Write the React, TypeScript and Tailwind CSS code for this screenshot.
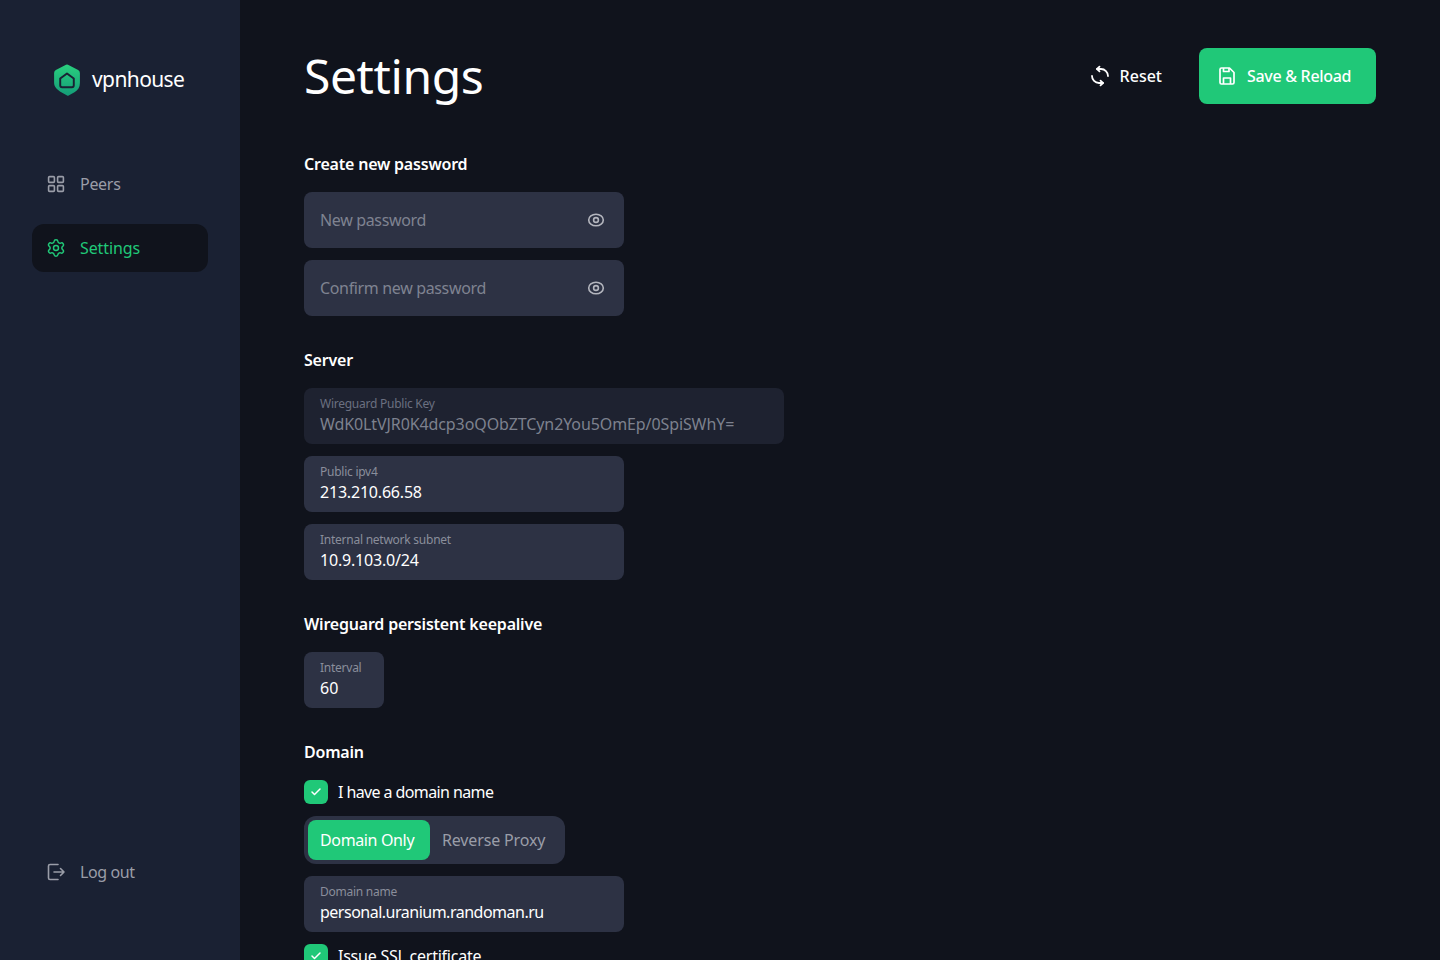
import { Check, Settings } from "lucide-react";

const font = "font-['Noto_Sans',sans-serif]";

function Logo() {
  return (
    <div className="flex h-8 items-center gap-[11px] pl-[21px]">
      <svg width="28" height="32" viewBox="0 0 28 33" fill="none">
        <defs>
          <linearGradient id="shield" x1="14" y1="0" x2="14" y2="33" gradientUnits="userSpaceOnUse">
            <stop stopColor="#2ad07e" />
            <stop offset="1" stopColor="#149c78" />
          </linearGradient>
        </defs>
        <path
          d="M12 1.200a4 4 0 0 1 4 0l9.500 5a3.400 3.400 0 0 1 1.800 3v10.300c0 4.400-2 7.400-5.600 9.600l-6 3.400a1.600 1.600 0 0 1-1.600 0l-6-3.400C4.700 26.900.7 23.900.7 19.500V9.200a3.400 3.400 0 0 1 1.800-3z"
          fill="url(#shield)"
        />
        <path d="M14 9.800L21 15V22a2 2 0 0 1-2 2H9a2 2 0 0 1-2-2V15Z" stroke="#1a2133" strokeWidth="2" strokeLinejoin="round" />
      </svg>
      <span className="pb-[2px] text-[21px] leading-none tracking-[-0.6px] text-white">vpnhouse</span>
    </div>
  );
}

function GridIcon() {
  return (
    <svg width="20" height="20" viewBox="0 0 20 20" fill="none" stroke="currentColor" strokeWidth="1.6">
      <rect x="2.600" y="2.600" width="5.800" height="5.800" rx="1" />
      <rect x="11.600" y="2.600" width="5.800" height="5.800" rx="1" />
      <rect x="2.600" y="11.600" width="5.800" height="5.800" rx="1" />
      <rect x="11.600" y="11.600" width="5.800" height="5.800" rx="1" />
    </svg>
  );
}

function LogoutIcon() {
  return (
    <svg width="20" height="20" viewBox="0 0 20 20" fill="none" stroke="currentColor" strokeWidth="1.6" strokeLinecap="round" strokeLinejoin="round">
      <path d="M12 2.500H4A1.500 1.500 0 0 0 2.500 4v12A1.500 1.500 0 0 0 4 17.500h8" />
      <path d="M8 10h10M14.500 6.500L18 10l-3.500 3.500" />
    </svg>
  );
}

function ResetIcon() {
  return (
    <svg width="24" height="24" viewBox="0 0 24 24" fill="none" stroke="currentColor" strokeWidth="1.800" strokeLinecap="round" strokeLinejoin="round">
      <path d="M9 5h4a7 7 0 0 1 7 7" />
      <path d="M11.500 2.700L9 5l2.500 2.300" />
      <path d="M15 19h-4a7 7 0 0 1-7-7" />
      <path d="M12.500 16.700L15 19l-2.500 2.300" />
    </svg>
  );
}

function SaveIcon() {
  return (
    <svg width="16" height="18" viewBox="0 0 16 18" fill="none" stroke="currentColor" strokeWidth="1.700" strokeLinejoin="round">
      <path d="M2.500 1h8L15 5.500v10a1.500 1.500 0 0 1-1.500 1.500h-11A1.500 1.500 0 0 1 1 15.500v-13A1.500 1.500 0 0 1 2.500 1z" />
      <path d="M4.500 1v3.500h5.500V1" />
      <path d="M4.500 17v-6h7v6" />
    </svg>
  );
}

function EyeIcon() {
  return (
    <svg width="18" height="14" viewBox="0 0 18 14" fill="none" stroke="#b4b6be" strokeWidth="1.600">
      <ellipse cx="9" cy="7" rx="7.300" ry="5.800" />
      <circle cx="9" cy="7" r="2.400" />
    </svg>
  );
}

function TextField({
  label,
  value,
  muted,
  width = "w-[320px]",
  spacing = "",
}: {
  label: string;
  value: string;
  muted?: boolean;
  width?: string;
  spacing?: string;
}) {
  return (
    <div className={`${width} h-14 rounded-lg px-4 pt-[8px] ${muted ? "bg-[#1e2230]" : "bg-[#2d3244]"}`}>
      <div className={`text-[12px] leading-[16px] tracking-[-0.25px] ${muted ? "text-[#6b7080]" : "text-[#8a8e9b]"}`}>{label}</div>
      <div className={`text-[16px] leading-[24px] ${spacing} ${muted ? "text-[#7d818e]" : "text-white"}`}>{value}</div>
    </div>
  );
}

function PasswordField({ placeholder }: { placeholder: string }) {
  return (
    <div className="flex h-14 w-[320px] items-center justify-between rounded-lg bg-[#2d3244] pl-4 pr-[19px]">
      <span className="text-[16px] tracking-[-0.35px] text-[#7f8391]">{placeholder}</span>
      <EyeIcon />
    </div>
  );
}

function CheckRow({ label, spacing }: { label: string; spacing: string }) {
  return (
    <div className="flex h-6 items-center gap-[10px]">
      <div className="flex h-6 w-6 items-center justify-center rounded-md bg-[#20c878]">
        <Check className="h-[12px] w-[12px] text-white" strokeWidth={3} />
      </div>
      <span className={`text-[16px] text-white ${spacing}`}>{label}</span>
    </div>
  );
}

function SectionTitle({ children }: { children: string }) {
  return <h2 className="mb-4 text-[16px] font-semibold leading-6 tracking-[-0.2px] text-white">{children}</h2>;
}

export default function App() {
  return (
    <div className={`${font} flex h-screen overflow-hidden bg-[#10131c]`}>
      <aside className="flex w-[240px] shrink-0 flex-col bg-[#1a2133] px-8 pb-[64px] pt-16">
        <div className="-mx-[22px] mb-16 pl-[22px]">
          <Logo />
        </div>
        <nav className="flex flex-col gap-4">
          <a className="flex h-12 items-center gap-[14px] pl-[14px] text-[16px] tracking-[-0.3px] text-[#9a9da8]">
            <GridIcon />
            Peers
          </a>
          <a className="flex h-12 items-center gap-[14px] rounded-xl bg-[#10131c] pl-[14px] text-[16px] tracking-[-0.1px] text-[#20c878]">
            <Settings className="h-[20px] w-[20px]" strokeWidth={1.75} />
            Settings
          </a>
        </nav>
        <a className="mt-auto flex h-12 items-center gap-[14px] pl-[14px] text-[16px] tracking-[-0.4px] text-[#9a9da8]">
          <LogoutIcon />
          Log out
        </a>
      </aside>

      <main className="flex-1 overflow-hidden px-16 pt-12">
        <header className="mb-12 flex h-14 items-center justify-between">
          <h1 className="text-[48px] font-normal leading-[56px] tracking-[-0.4px] text-white">Settings</h1>
          <div className="flex items-center gap-[12px]">
            <button className="flex h-14 items-center gap-[8px] pl-[21px] pr-[25px] text-[16px] font-medium text-white">
              <ResetIcon />
              Reset
            </button>
            <button className="flex h-14 w-[177px] items-center gap-[12px] rounded-lg bg-[#20c878] pl-5 text-[16px] font-medium tracking-[-0.3px] text-white">
              <SaveIcon />
              Save &amp; Reload
            </button>
          </div>
        </header>

        <section className="mb-8">
          <SectionTitle>Create new password</SectionTitle>
          <div className="flex flex-col gap-3">
            <PasswordField placeholder="New password" />
            <PasswordField placeholder="Confirm new password" />
          </div>
        </section>

        <section className="mb-8">
          <SectionTitle>Server</SectionTitle>
          <div className="flex flex-col gap-3">
            <TextField label="Wireguard Public Key" value="WdK0LtVJR0K4dcp3oQObZTCyn2You5OmEp/0SpiSWhY=" muted width="w-[480px]" spacing="tracking-[-0.1px]" />
            <TextField label="Public ipv4" value="213.210.66.58" spacing="tracking-[-0.2px]" />
            <TextField label="Internal network subnet" value="10.9.103.0/24" spacing="tracking-[-0.2px]" />
          </div>
        </section>

        <section className="mb-8">
          <SectionTitle>Wireguard persistent keepalive</SectionTitle>
          <TextField label="Interval" value="60" width="w-20" />
        </section>

        <section>
          <SectionTitle>Domain</SectionTitle>
          <div className="flex flex-col gap-3">
            <CheckRow label="I have a domain name" spacing="tracking-[-0.6px]" />
            <div className="flex h-12 w-[261px] items-center rounded-xl bg-[#2d3244] p-1">
              <div className="flex h-10 w-[122px] items-center rounded-lg bg-[#20c878] pl-3 text-[16px] tracking-[-0.36px] text-white">Domain Only</div>
              <div className="pl-3 text-[16px] tracking-[-0.15px] text-[#9a9da8]">Reverse Proxy</div>
            </div>
            <TextField label="Domain name" value="personal.uranium.randoman.ru" spacing="tracking-[-0.5px]" />
            <CheckRow label="Issue SSL certificate" spacing="tracking-[-0.24px]" />
          </div>
        </section>
      </main>
    </div>
  );
}
